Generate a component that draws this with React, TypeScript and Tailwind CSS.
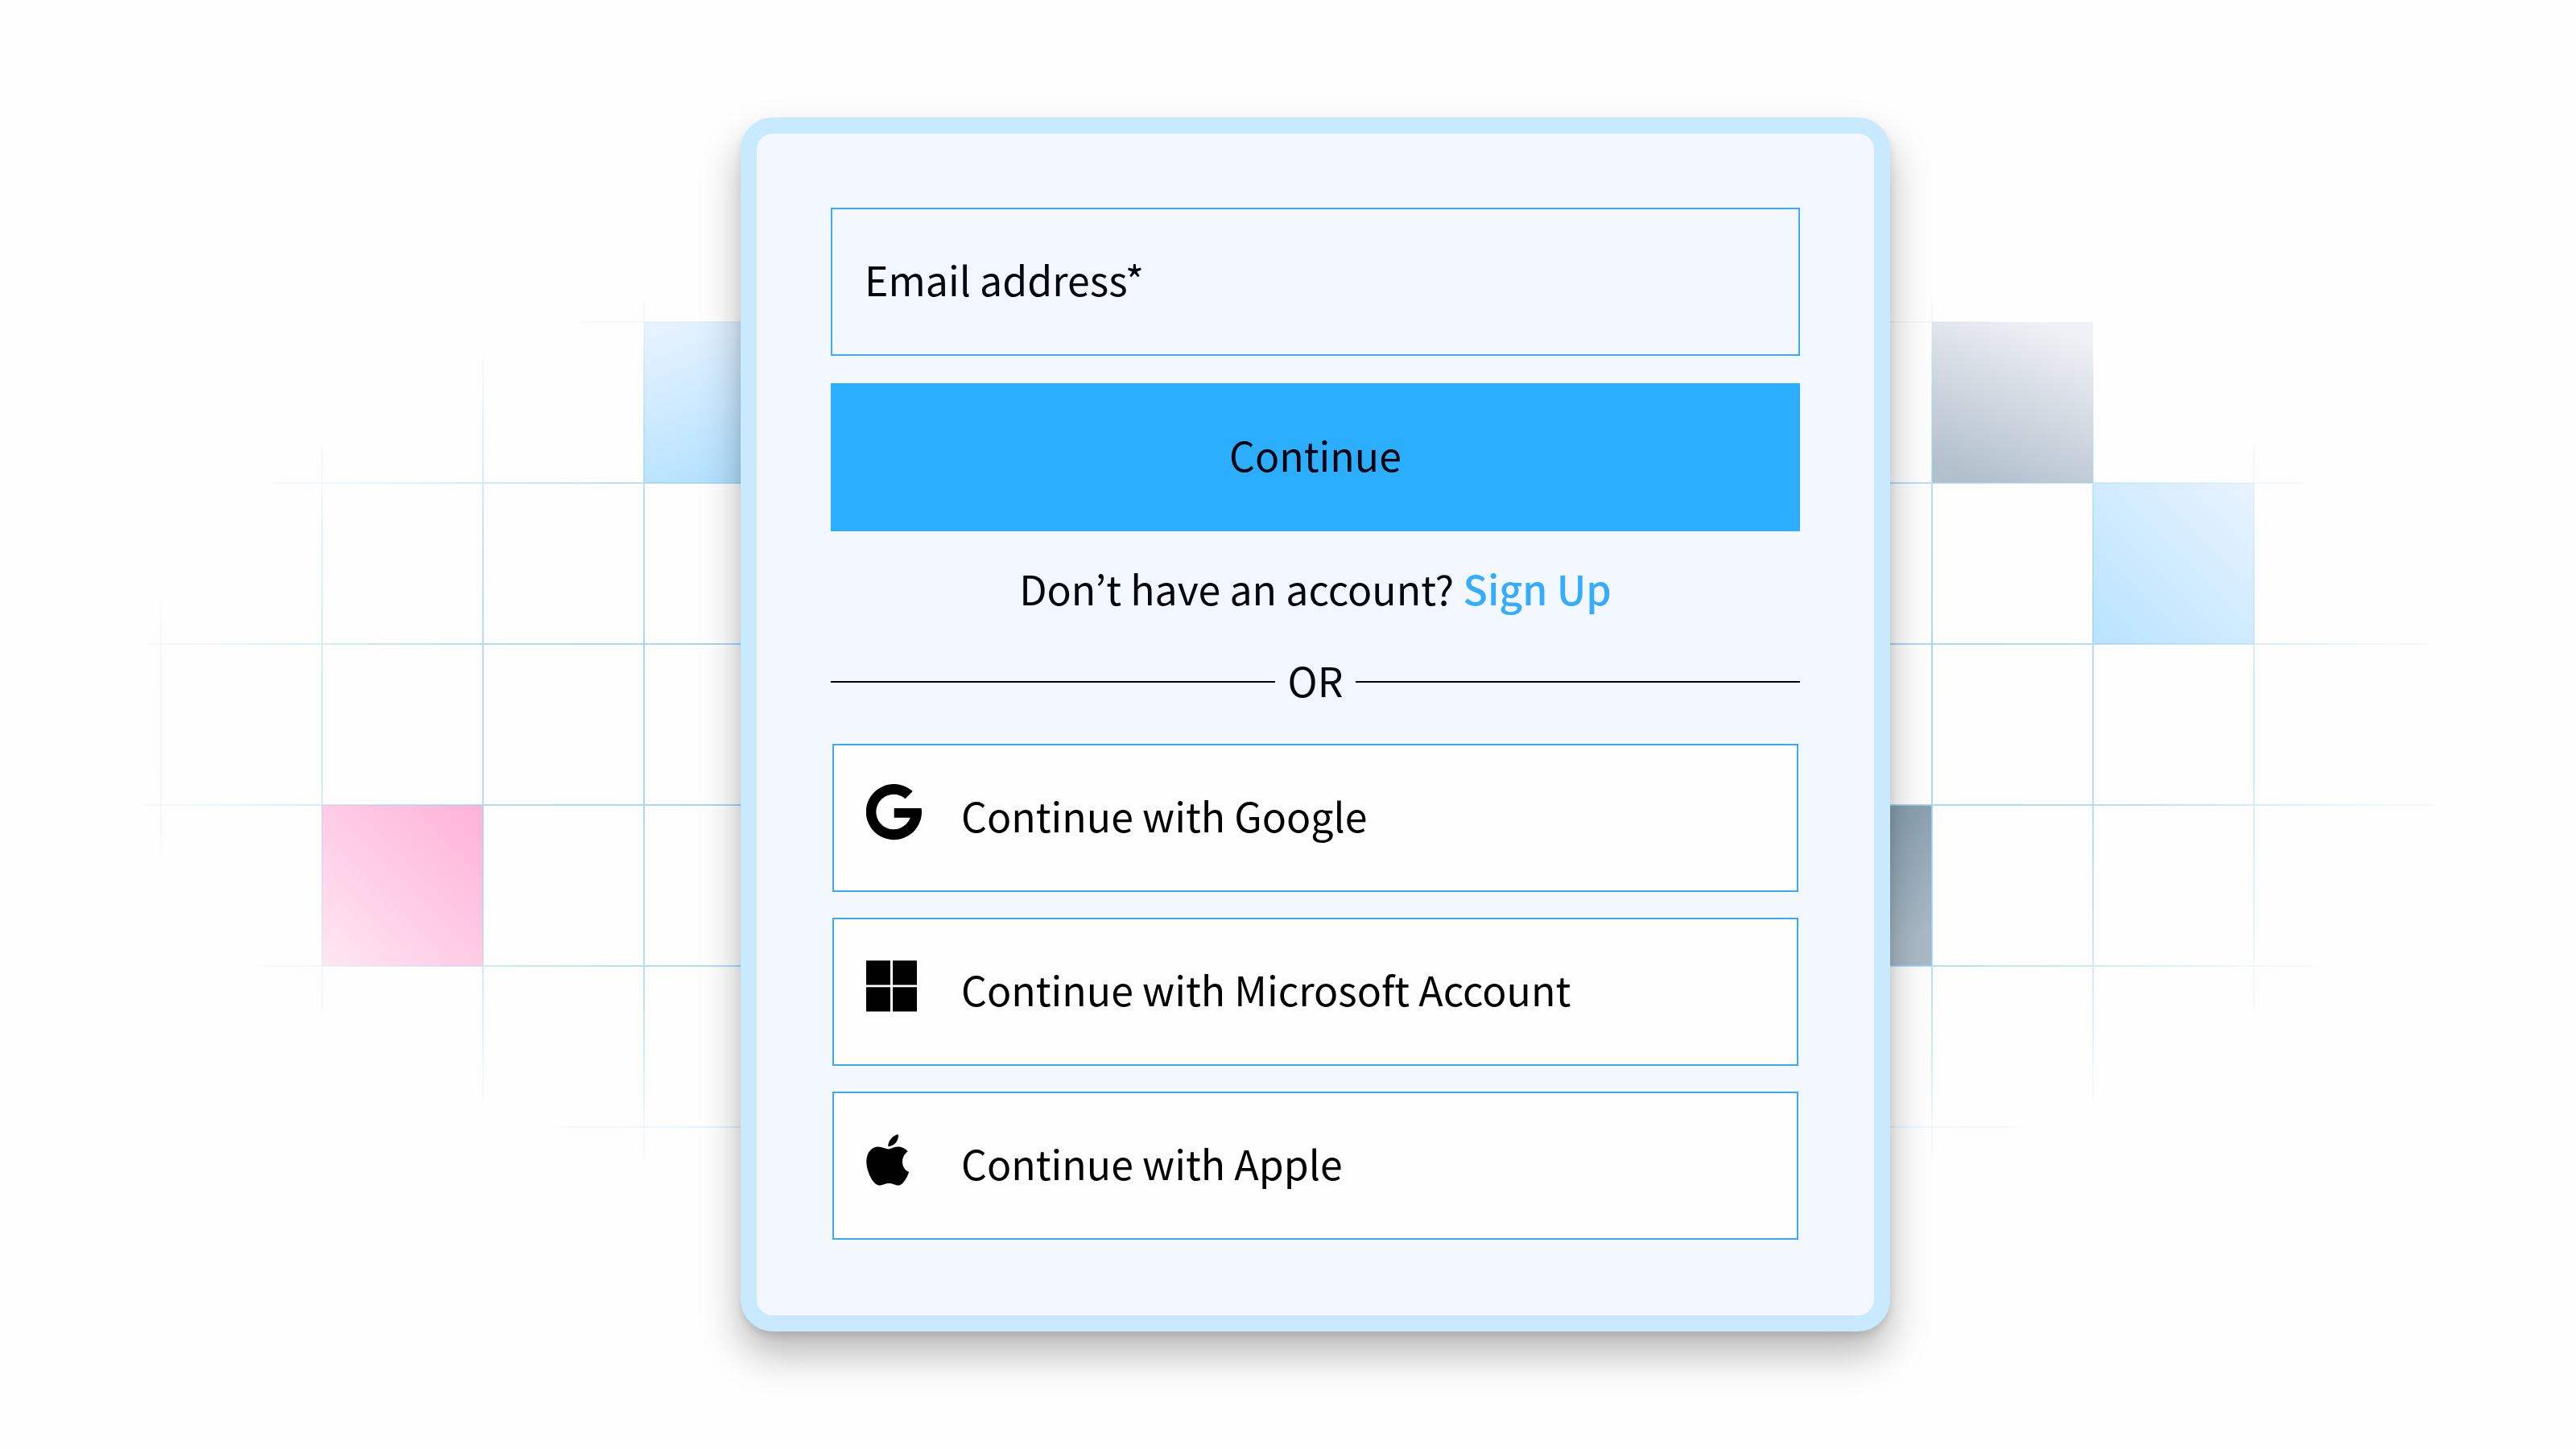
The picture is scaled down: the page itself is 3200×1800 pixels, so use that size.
import type { ReactNode } from "react";

const COLUMNS = [200, 400, 600, 800, 1000, 2200, 2400, 2600, 2800];
const ROWS = [400, 600, 800, 1000, 1200, 1400];

function GoogleIcon() {
  return (
    <svg viewBox="0 0 69 70" className="h-[70px] w-[69px]">
      <path d="M57.7 9A34.6 34.6 0 1 0 69 35Q69 32 68.6 30H34.7V41.8H54.7A21.8 21.8 0 1 1 48.6 18.2Z" />
    </svg>
  );
}

function MicrosoftIcon() {
  return (
    <svg viewBox="0 0 63 64" className="h-16 w-[63px]">
      <path d="M0 .3H30V30.5H0ZM33 .3H63V30.5H33ZM0 33.3H30V63.6H0ZM33 33.3H63V63.6H33Z" />
    </svg>
  );
}

function AppleIcon() {
  return (
    <svg viewBox="0 0 54 64" className="h-16 w-[54px]">
      <path d="M40 .2C40.6 7.6 35 15 27.3 15.2C26.6 8.4 33.4 1 40 .2Z" />
      <path d="M51.7 21.5C48.6 17.2 43.6 15.4 39 15.4C34 15.4 30.4 18.4 27.3 18.4C24.2 18.4 20 15.6 14.6 15.6C6 15.8 .3 23.6 .3 34C.3 43 4.6 54 9.8 59.8C12 62.3 14 63.4 16.4 63.4C20.6 63.4 23 60.9 28.4 60.9C33.6 60.9 35.8 63.4 40 63.4C42.6 63.4 44.6 62 46.8 59C49.8 55 52 50.8 53.2 46.7C48.4 45 45 40.2 45 34.2C45 28.6 47.8 24 51.7 21.5Z" />
    </svg>
  );
}

function Backdrop() {
  return (
    <svg
      viewBox="0 0 3200 1800"
      className="absolute inset-0 h-[1800px] w-[3200px]"
      aria-hidden="true"
    >
      <defs>
        <radialGradient
          id="fade"
          gradientUnits="userSpaceOnUse"
          cx="0"
          cy="0"
          r="1"
          gradientTransform="translate(1600 905) scale(1465 650)"
        >
          <stop offset="0.4" stopColor="#fff" />
          <stop offset="0.7" stopColor="#fff" stopOpacity="0.78" />
          <stop offset="0.86" stopColor="#fff" stopOpacity="0.35" />
          <stop offset="1" stopColor="#fff" stopOpacity="0" />
        </radialGradient>
        <mask id="grid-mask" maskUnits="userSpaceOnUse" x="0" y="0" width="3200" height="1800">
          <rect width="3200" height="1800" fill="url(#fade)" />
        </mask>
        <linearGradient id="blue-left" x1="0.2" y1="0" x2="0.6" y2="1">
          <stop offset="0" stopColor="#e6f2ff" />
          <stop offset="1" stopColor="#b0e0ff" />
        </linearGradient>
        <linearGradient id="blue-right" x1="0" y1="1" x2="1" y2="0">
          <stop offset="0" stopColor="#b8e3ff" />
          <stop offset="0.5" stopColor="#d0ebff" />
          <stop offset="1" stopColor="#e9f3ff" />
        </linearGradient>
        <linearGradient id="pink" x1="0" y1="1" x2="1" y2="0">
          <stop offset="0" stopColor="#ffe7f3" />
          <stop offset="0.5" stopColor="#ffcbe5" />
          <stop offset="1" stopColor="#ffb2d8" />
        </linearGradient>
        <linearGradient id="gray" x1="0.3" y1="1" x2="0.7" y2="0">
          <stop offset="0" stopColor="#b2c0cc" />
          <stop offset="1" stopColor="#f0f1f6" />
        </linearGradient>
        <linearGradient id="slate" x1="0" y1="0" x2="0.3" y2="1">
          <stop offset="0" stopColor="#7f98a9" />
          <stop offset="1" stopColor="#a9bac6" />
        </linearGradient>
      </defs>
      <rect x="800" y="400" width="200" height="200" fill="url(#blue-left)" />
      <rect x="400" y="1000" width="200" height="200" fill="url(#pink)" />
      <rect x="2400" y="400" width="200" height="200" fill="url(#gray)" />
      <rect x="2600" y="600" width="200" height="200" fill="url(#blue-right)" />
      <rect x="2200" y="1000" width="200" height="200" fill="url(#slate)" />
      <g mask="url(#grid-mask)" stroke="#a0d2f6" strokeWidth="2">
        {COLUMNS.map((x) => (
          <line key={x} x1={x} x2={x} y1="200" y2="1600" />
        ))}
        {ROWS.map((y) => (
          <line key={y} x1="100" x2="3100" y1={y} y2={y} />
        ))}
      </g>
    </svg>
  );
}

function SocialButton({ icon, label }: { icon: ReactNode; label: string }) {
  return (
    <button
      type="button"
      className="flex h-[184px] w-[1200px] items-center border-2 border-[#3eaaf5] bg-[#fefefe] pl-10 pb-2"
    >
      <span className="flex w-[118px] items-center pb-1.5">{icon}</span>
      <span>{label}</span>
    </button>
  );
}

export default function App() {
  return (
    <div className="relative flex h-[1800px] w-[3200px] flex-col items-center overflow-hidden bg-[#fefefe] pt-[146px] pl-[68px] font-['Noto_Sans_CJK_KR',sans-serif] text-[50px] leading-[60px] text-[#02040f]">
      <Backdrop />
      <form className="relative flex h-[1508px] w-[1428px] flex-col items-center rounded-[40px] border-[20px] border-[#c9e9ff] bg-[#f3f7ff] pt-[92px] shadow-[0_28px_50px_rgba(0,0,0,0.28),0_6px_10px_rgba(0,0,0,0.1)]">
        <label className="flex h-[184px] w-[1204px] items-center border-2 border-[#3eaaf5] pl-10 pb-2">
          Email address*
        </label>
        <button
          type="button"
          className="mt-[34px] flex h-[184px] w-[1204px] items-center justify-center bg-[#2caeff] pb-2"
        >
          Continue
        </button>
        <p className="mt-10 whitespace-pre">
          Don’t have an account? <a className="font-medium text-[#36acff]">Sign Up</a>
        </p>
        <div className="mt-[54px] flex h-[66px] w-[1204px] items-center">
          <span className="h-0.5 flex-1 bg-[#02040f]" />
          <span className="w-[100px] pb-1.5 text-center">OR</span>
          <span className="h-0.5 flex-1 bg-[#02040f]" />
        </div>
        <div className="mt-11 flex flex-col gap-8 text-black">
          <SocialButton icon={<GoogleIcon />} label="Continue with Google" />
          <SocialButton icon={<MicrosoftIcon />} label="Continue with Microsoft Account" />
          <SocialButton icon={<AppleIcon />} label="Continue with Apple" />
        </div>
      </form>
    </div>
  );
}
